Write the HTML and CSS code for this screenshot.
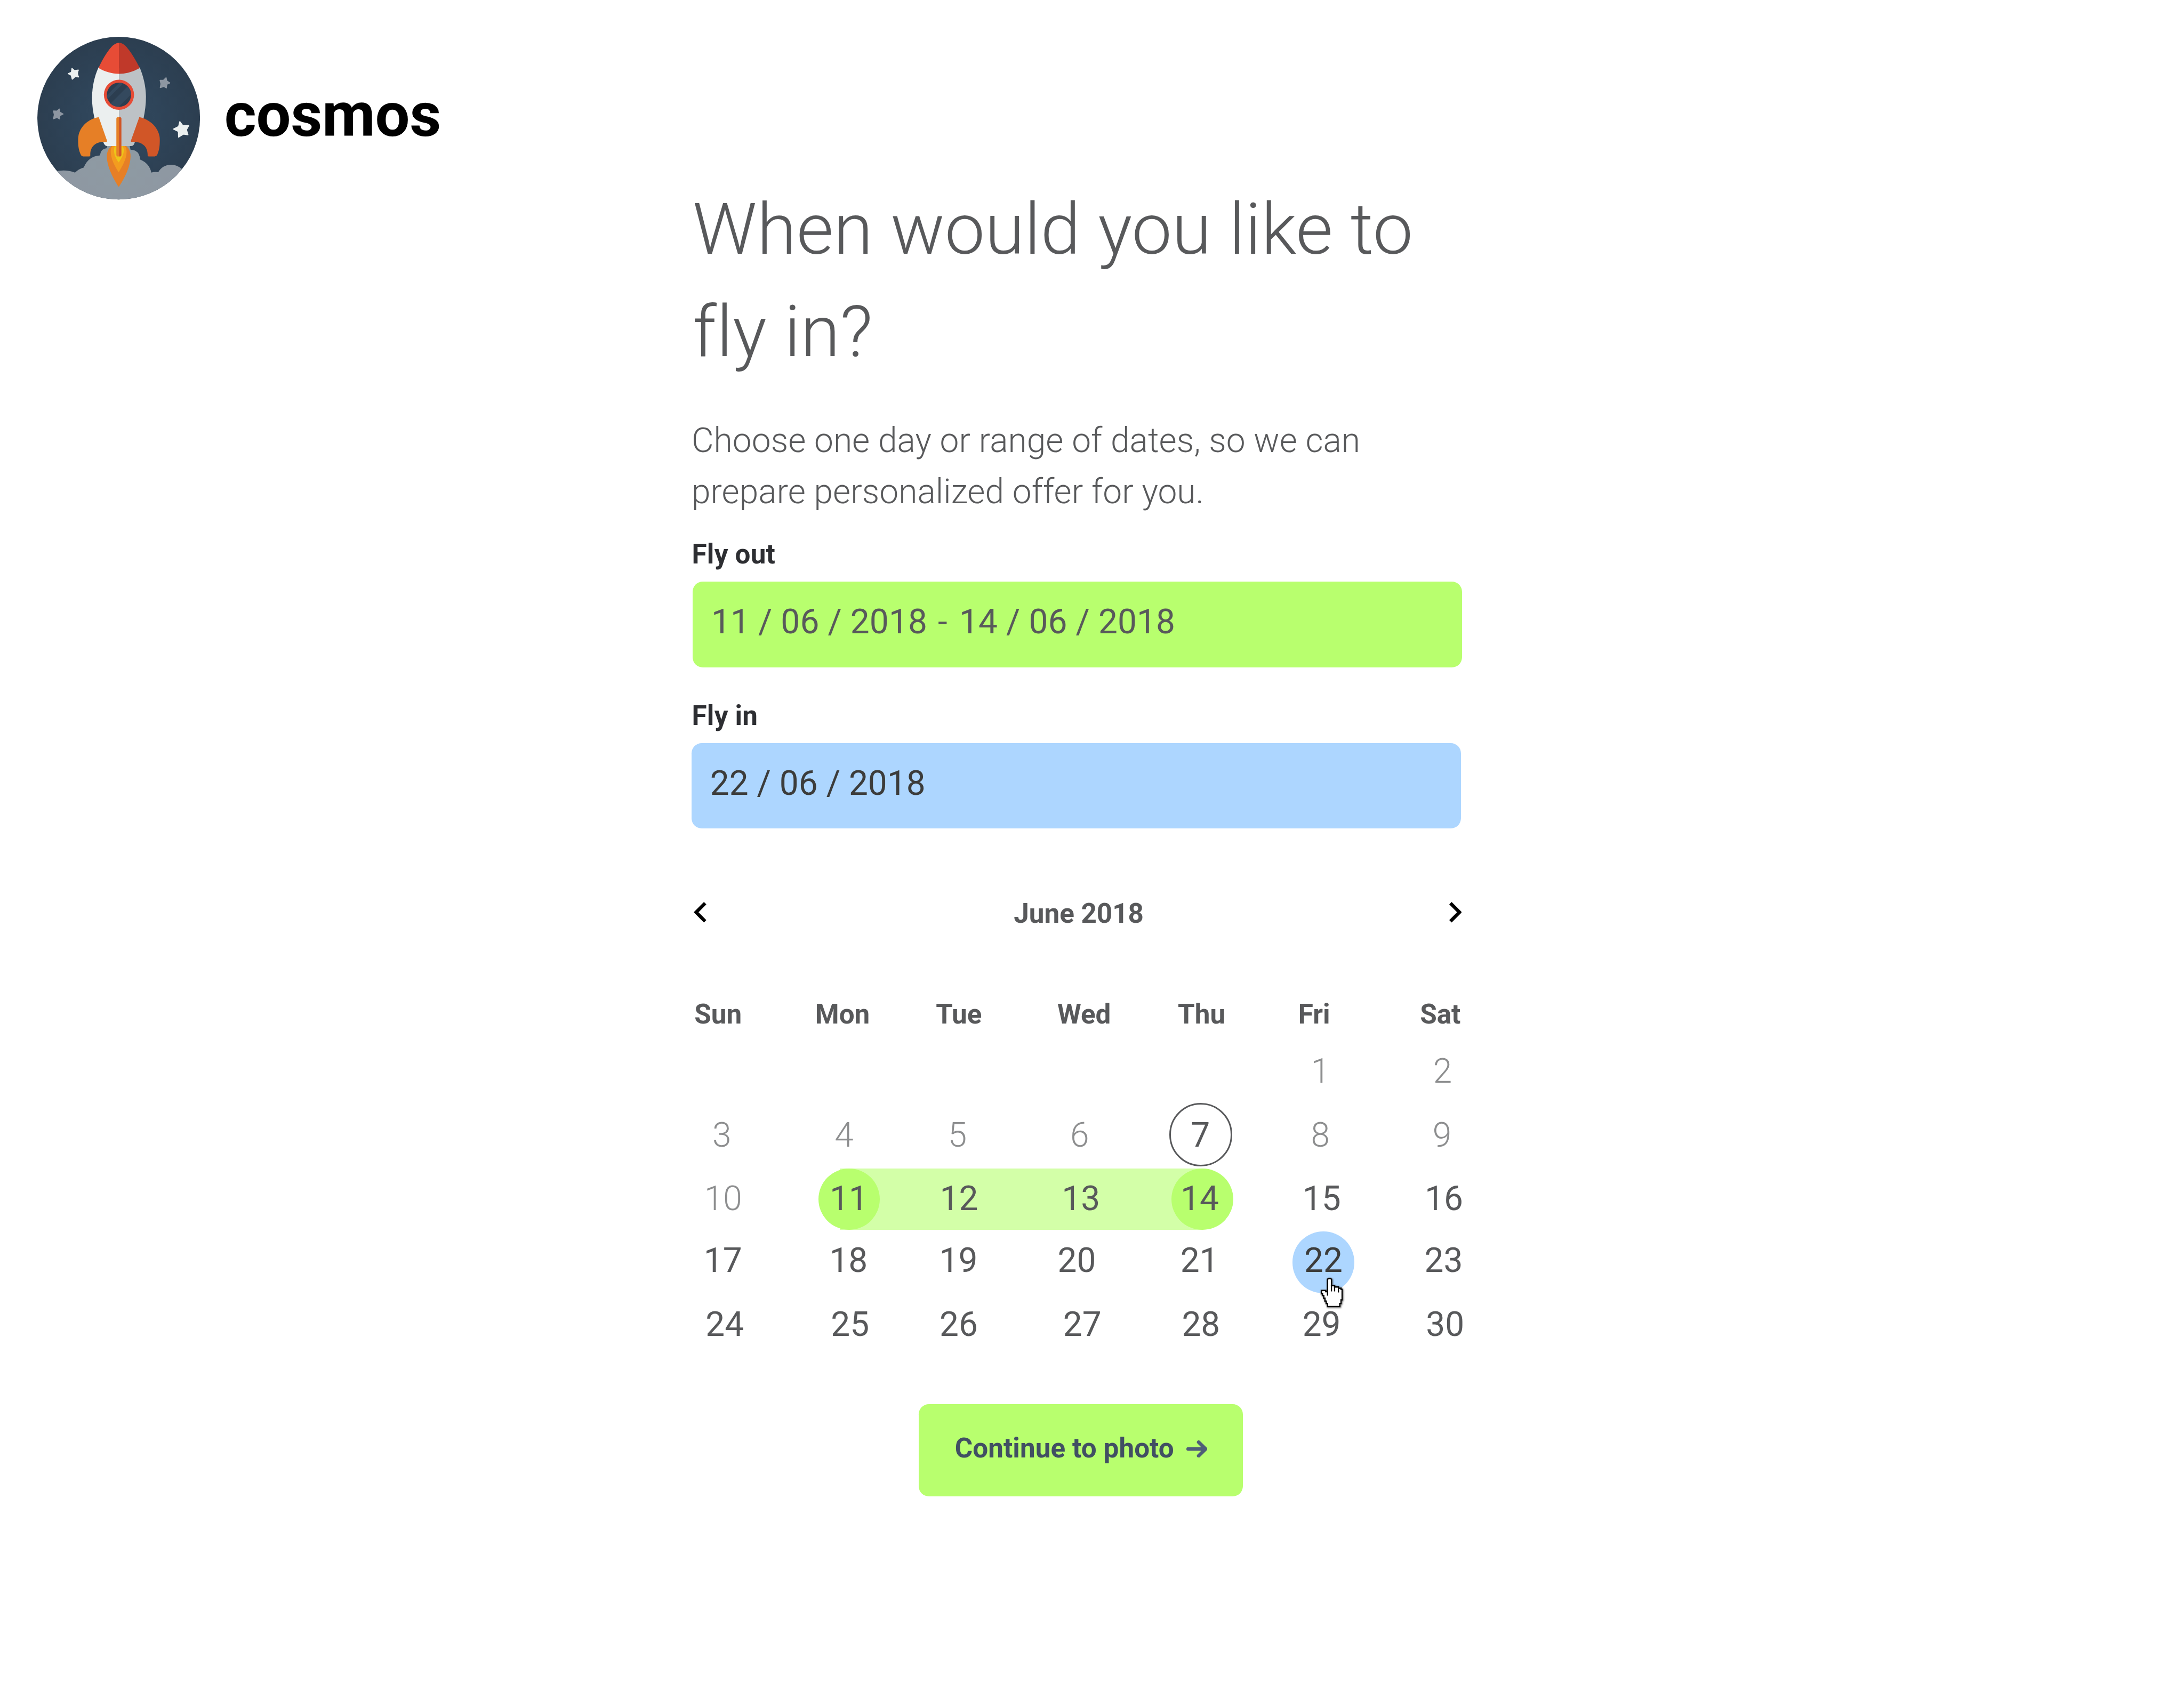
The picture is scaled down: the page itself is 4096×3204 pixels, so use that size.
FILE: index.html
```html
<!DOCTYPE html>
<html lang="en">
<head>
<meta charset="utf-8">
<title>cosmos</title>
<link rel="stylesheet" href="styles.css">
</head>
<body>
<div class="page">
  <header class="brand">
    <svg class="brand-logo" viewBox="31 27 1200 1200" aria-hidden="true">
      <defs>
        <radialGradient id="sky" gradientUnits="userSpaceOnUse" cx="631" cy="627" r="596">
          <stop offset="0" stop-color="#33495e"/>
          <stop offset=".45" stop-color="#2f455a"/>
          <stop offset="1" stop-color="#2c3e50"/>
        </radialGradient>
        <radialGradient id="smoke" gradientUnits="userSpaceOnUse" cx="631" cy="900" r="480">
          <stop offset="0" stop-color="#8e9ba3"/>
          <stop offset="1" stop-color="#8e97a2"/>
        </radialGradient>
        <clipPath id="disc"><circle cx="631" cy="627" r="596"/></clipPath>
        <clipPath id="glass"><circle cx="633" cy="456" r="89"/></clipPath>
      </defs>
      <circle cx="631" cy="627" r="596" fill="url(#sky)"/>
      <g clip-path="url(#disc)">
        <path fill="url(#smoke)" d="M150 1022Q235 998 311 1026Q340 998 375 989Q407 907 495 900Q498 853 541 848Q547 843 547 820H711Q712 840 718 859Q784 860 788 930Q857 959 870 1026Q897 1018 921 1023Q950 970 1015 968Q1062 969 1095 1001L1240 1100V1240H30V1022Z"/>
      </g>
      <path fill="#e67f26" d="M580 830H684C708 850 718 875 718 906C717 985 675 1064 636 1125Q631 1134 626 1125C580 1050 545 975 544 906C545 875 556 850 580 830Z"/>
      <path fill="#f39c1f" d="M586 830H675C685 842 689 855 689 875C688 928 660 975 631 1024C600 975 574 925 573 875C573 855 576 842 586 830Z"/>
      <path fill="#edc51a" d="M605 830H658C667 842 669 855 668 870C665 903 648 925 634 948Q631 953 628 948C610 922 598 898 597 868C596 854 598 842 605 830Z"/>
      <path fill="#ebefef" d="M633 260V832H548C536 832 528 824 522 812L454 630C442 575 435 525 436 468C438 390 453 325 483 256Z"/>
      <path fill="#bdc2c6" d="M633 260V832H721C733 832 741 826 746 812L813 630C824 575 831 525 831 468C829 390 813 325 785 256Z"/>
      <path fill="#e74c36" d="M634 75V302C580 301 530 287 483 259C509 202 545 142 578 105Q608 74 634 75Z"/>
      <path fill="#c0392a" d="M633 75V302C688 301 738 287 785 259C757 204 722 144 688 105Q660 74 633 75Z"/>
      <circle cx="633" cy="456" r="110.500" fill="#e74c36"/>
      <g clip-path="url(#glass)">
        <rect x="540" y="360" width="190" height="190" fill="#2c3e50"/>
        <path fill="#34495e" d="M540 464L645 359H678L540 497ZM560 531L710 381L745 430L620 555Z"/>
      </g>
      <path fill="#e67f26" d="M485 620L545 791Q548 803 536 801C470 797 420 830 423 900Q423 908 415 908H369Q357 906 353 894C338 862 333 830 334 780C336 700 400 635 485 620Z"/>
      <path fill="#d15627" d="M782 620L721 791Q718 803 730 801C796 797 846 830 843 900Q843 908 851 908H896Q909 906 914 894C928 862 933 830 932 780C930 705 866 637 782 620Z"/>
      <path fill="#e67f26" d="M633 620H626Q614 620 614 632V896Q614 908 626 908H633Z"/>
      <path fill="#d15627" d="M633 620H639Q651 620 651 632V896Q651 908 639 908H633Z"/>
      <g stroke-linejoin="round" stroke-width="8">
        <path fill="#ebefef" stroke="#ebefef" d="M289 263L307 279L335 275Q322 300 337 325L311 323L291 341L284 313L262 301L285 291Z"/>
        <path fill="#ebefef" stroke="#ebefef" d="M1079 653L1098 679L1144 681L1127 712L1138 749L1104 744L1070 766L1069 725L1033 707L1070 689Z"/>
        <path fill="#8e97a2" stroke="#8e97a2" d="M935 350L959 350L978 332L983 355L1005 369L983 379L980 405L962 394L936 403L941 376Z"/>
        <path fill="#8e97a2" stroke="#8e97a2" d="M154 575L179 576L196 561L200 584L223 597L200 608L197 632L180 622L154 631L160 602Z"/>
      </g>
    </svg>
    <span class="brand-name">cosmos</span>
  </header>

  <main class="booking">
    <h1 class="title">When would you like to<br>fly in?</h1>
    <p class="lead">Choose one day or range of dates, so we can<br>prepare personalized offer for you.</p>

    <div class="field field-out">
      <div class="field-label">Fly out</div>
      <div class="field-value">11 / 06 / 2018<span class="dash"> - </span>14 / 06 / 2018</div>
    </div>
    <div class="field field-in">
      <div class="field-label">Fly in</div>
      <div class="field-value">22 / 06 / 2018</div>
    </div>

    <div class="month">
      <svg class="chevron" viewBox="8 6 7.410 12"><path d="M15.410 7.410L14 6l-6 6 6 6 1.410-1.410L10.830 12z"/></svg>
      <span class="month-name">June 2018</span>
      <svg class="chevron" viewBox="8.590 6 7.410 12"><path d="M10 6L8.590 7.410 13.170 12l-4.580 4.590L10 18l6-6z"/></svg>
    </div>

    <div class="weekdays"><span>Sun</span><span>Mon</span><span>Tue</span><span>Wed</span><span>Thu</span><span>Fri</span><span>Sat</span></div>
    <div class="week week-1 past"><span>1</span><span>2</span></div>
    <div class="week week-2 past"><span>3</span><span>4</span><span>5</span><span>6</span><span class="day today">7</span><span>8</span><span>9</span></div>
    <div class="week week-3"><i class="range"></i><span class="past">10</span><span class="day range-start">11</span><span>12</span><span>13</span><span class="day range-end">14</span><span>15</span><span>16</span></div>
    <div class="week week-4"><span>17</span><span>18</span><span>19</span><span>20</span><span>21</span><span class="day picked">22<svg class="pointer" viewBox="300 410 200 250" aria-hidden="true"><path class="pointer-edge" d="M365 519V436L374 431H386L394 436V484H417V493H445V502H464V511H472V587H464V614H455V636H365V614H356V596H347V575H338V555H329V542H321V519H352V528H365Z"/><path class="pointer-hand" d="M365 528V436L374 431H386L394 436V484H417V493H445V502H464V511H472V587H464V614H455V636H365V614H356V596H347V575H338V555H329V542H321V519H352V528H365Z"/><path class="pointer-fingers" d="M365 519V557M394 480V525M417 484V525M445 493V533"/></svg></span><span>23</span></div>
    <div class="week week-5"><span>24</span><span>25</span><span>26</span><span>27</span><span>28</span><span>29</span><span>30</span></div>

    <button class="continue" type="button">
      <span>Continue to photo</span>
      <svg class="arrow" viewBox="111 87 154 126" aria-hidden="true"><path d="M124 150H248M201 100L252 150L201 200"/></svg>
    </button>
  </main>
</div>
</body>
</html>
```
FILE: styles.css
```css
/* 1rem = 100 design pixels */
html { font-size: 76.8px; }
*, *::before { box-sizing: border-box; }
body {
  margin: 0;
  background: #fff;
  color: #58595b;
  font-family: Roboto, "Liberation Sans", sans-serif;
}
.page { display: flex; align-items: flex-start; height: 41.71rem; overflow: hidden; }

.brand {
  display: flex;
  flex: none;
  width: 16.885rem;
  padding: 0.89rem 0 0 0.903rem;
}
.brand-logo { width: 4rem; height: 4rem; flex: none; }
.brand-name {
  margin: 0.917rem 0 0 0.576rem;
  font-size: 1.5rem;
  line-height: 2rem;
  font-weight: 700;
  letter-spacing: -0.004rem;
  color: #000;
}

.booking { flex: none; width: 18.83rem; padding-top: 4.35rem; }
.title {
  margin: 0 0 0.79rem 0.03rem;
  font-size: 1.75rem;
  line-height: 2.5rem;
  font-weight: 300;
  letter-spacing: 0.002rem;
  white-space: nowrap;
}
.lead {
  margin: 0 0 0.408rem 0.003rem;
  font-size: 0.83333rem;
  line-height: 1.25rem;
  font-weight: 300;
  letter-spacing: 0.0008rem;
  white-space: nowrap;
}

.field-label {
  padding-left: 0.01rem;
  font-size: 0.66667rem;
  line-height: 1rem;
  font-weight: 700;
  letter-spacing: 0.003rem;
  color: #2d2e32;
}
.field-value {
  width: 18.79rem;
  height: 2.085rem;
  margin-top: 0.163rem;
  padding: 0.359rem 0 0 0.456rem;
  border-radius: 0.25rem;
  font-size: 0.83333rem;
  line-height: 1.25rem;
}
.field-out .field-value { margin-left: 0.028rem; background: #b8ff6e; letter-spacing: 0.001rem; }
.field-in { margin-top: 0.694rem; }
.field-in .field-value { background: #add6ff; color: #3c3c3b; }
.dash { letter-spacing: 0.042rem; margin-left: 0.012rem; }

.month {
  display: flex;
  align-items: center;
  justify-content: space-between;
  height: 1rem;
  margin: 1.583rem 0 1.463rem;
  padding: 0 0.02rem 0 0.055rem;
}
.month-name { padding-left: 0.05rem; font-size: 0.66667rem; line-height: 1rem; font-weight: 700; }
.chevron { width: 0.309rem; height: 0.5rem; margin-top: -0.07rem; fill: #000; }

.weekdays {
  display: grid;
  grid-template-columns: 2.95rem 2.947rem 2.966rem 2.944rem 2.94rem 2.973rem 1.2rem;
  padding-left: 0.072rem;
  margin-bottom: 0.265rem;
  font-size: 0.66667rem;
  line-height: 1rem;
  font-weight: 700;
}
.week {
  position: relative;
  display: grid;
  font-size: 0.83333rem;
  line-height: 1.25rem;
}
.week-1 { grid-template-columns: 2.985rem 1rem; padding-left: 15.126rem; margin-bottom: 0.317rem; }
.week-2 { grid-template-columns: 2.985rem 2.767rem 2.985rem 2.945rem 2.933rem 2.972rem 1rem; padding-left: 0.511rem; margin-bottom: 0.294rem; }
.week-3 { grid-template-columns: 3.061rem 2.692rem 2.978rem 2.9rem 2.978rem 2.985rem 1rem; padding-left: 0.313rem; margin-bottom: 0.266rem; }
.week-4 { grid-template-columns: 3.068rem 2.685rem 2.89rem 2.996rem 3.025rem 2.938rem 1rem; padding-left: 0.3rem; margin-bottom: 0.305rem; z-index: 1; }
.week-5 { grid-template-columns: 3.06rem 2.654rem 3.016rem 2.9rem 2.946rem 3.017rem 1rem; padding-left: 0.345rem; }
.week > span { position: relative; }
.past { font-weight: 300; color: #8d8e8f; }

/* round markers sit behind the day number */
.day { z-index: 1; }
.day::before {
  content: "";
  position: absolute;
  z-index: -1;
  top: -0.117rem;
  width: 1.5rem;
  height: 1.5rem;
  border-radius: 50%;
}
.week > .today { font-weight: 400; color: #58595b; }
.today::before { left: -0.528rem; top: -0.172rem; width: 1.54rem; height: 1.54rem; border: 0.042rem solid #58595b; }
.range-start::before { left: -0.273rem; background: #b8ff6e; }
.range-end::before { left: -0.216rem; background: #b8ff6e; }
.range {
  position: absolute;
  left: 3.625rem;
  top: -0.117rem;
  width: 8.85rem;
  height: 1.5rem;
  background: #d3ffa8;
}
.picked { color: #3c3c3b; }
.picked::before { left: -0.281rem; top: -0.092rem; background: #add6ff; }

.pointer {
  position: absolute;
  left: 0.351rem;
  top: 0.984rem;
  width: 0.667rem;
  height: 0.8333rem;
  overflow: visible;
  filter: drop-shadow(0.02rem 0.025rem 0.02rem rgba(0, 0, 0, 0.55));
}
.pointer-edge { fill: none; stroke: #777; stroke-width: 13; }
.pointer-hand { fill: #fff; stroke: #000; stroke-width: 9; }
.pointer-fingers { fill: none; stroke: #000; stroke-width: 9; }

.continue {
  display: flex;
  align-items: flex-start;
  width: 7.915rem;
  height: 2.254rem;
  margin: 1.318rem 0 0 5.553rem;
  padding: 0.585rem 0 0 0.878rem;
  border: 0;
  border-radius: 0.25rem;
  background: #b8ff6e;
  color: #414f63;
  font-family: inherit;
  font-size: 0.66667rem;
  line-height: 1rem;
  font-weight: 700;
  letter-spacing: 0.001rem;
  white-space: nowrap;
}
.arrow { width: 0.513rem; height: 0.42rem; margin: 0.3rem 0 0 0.298rem; flex: none; }
.arrow path { fill: none; stroke: #4e5d78; stroke-width: 26; stroke-linecap: round; stroke-linejoin: round; }
```
